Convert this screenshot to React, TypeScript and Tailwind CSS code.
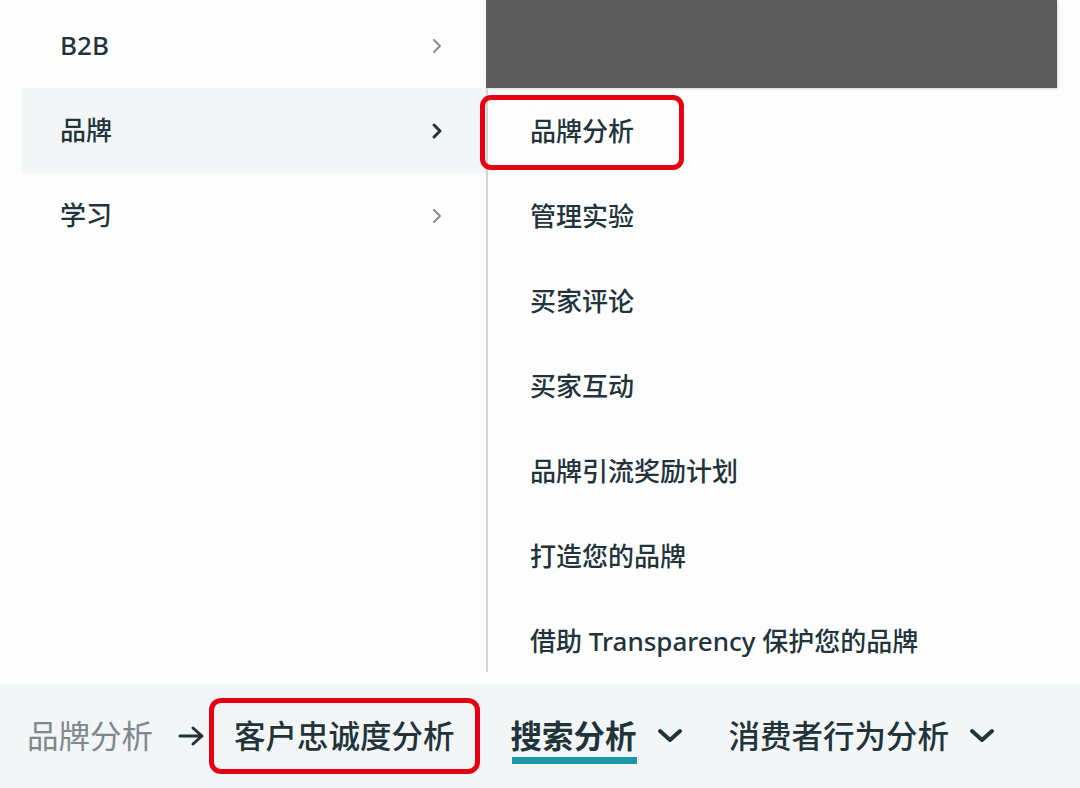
import React from "react";

const font = { fontFamily: '"Noto Sans", "Noto Sans CJK SC", sans-serif' };

function ChevronRight({ active }: { active?: boolean }) {
  return (
    <svg width="14" height="18" viewBox="0 0 14 18" fill="none">
      <path
        d="M4 3 L10 9 L4 15"
        stroke={active ? "#22343a" : "#8b9398"}
        strokeWidth={active ? 3 : 2.2}
        strokeLinecap="round"
        strokeLinejoin="round"
      />
    </svg>
  );
}

function ChevronDown() {
  return (
    <svg width="26" height="16" viewBox="0 0 26 16" fill="none">
      <path d="M3 3 L13 12 L23 3" stroke="#22343a" strokeWidth="4" strokeLinecap="round" strokeLinejoin="round" />
    </svg>
  );
}

function ArrowRight() {
  return (
    <svg width="28" height="22" viewBox="0 0 28 22" fill="none">
      <path d="M2 11 H24 M15 3 L24 11 L15 19" stroke="#22343a" strokeWidth="3" strokeLinecap="round" strokeLinejoin="round" />
    </svg>
  );
}

const leftItems = [
  { label: "B2B", active: false },
  { label: "品牌", active: true },
  { label: "学习", active: false },
];

const rightItems = [
  "品牌分析",
  "管理实验",
  "买家评论",
  "买家互动",
  "品牌引流奖励计划",
  "打造您的品牌",
  "借助 Transparency 保护您的品牌",
];

export default function App() {
  return (
    <div className="w-[1080px] h-[788px] bg-[#fdfdfd] flex flex-col overflow-hidden" style={font}>
      <div className="h-[684px] flex">
        {/* Left menu */}
        <div className="w-[486px] shrink-0 pl-[22px] pt-[3px]">
          {leftItems.map((it) => (
            <div
              key={it.label}
              className={`h-[85px] flex items-center justify-between pl-[38px] pr-[42px] ${it.active ? "bg-[#f3f6f7]" : ""}`}
            >
              <span className="text-[26px] font-medium text-[#22343a]">{it.label}</span>
              <ChevronRight active={it.active} />
            </div>
          ))}
        </div>
        {/* Right column */}
        <div className="flex-1 flex flex-col">
          <div className="h-[88px] w-[571px] bg-[#5d5d5d] shadow-[1px_1px_2px_rgba(0,0,0,0.15)]" />
          <div className="flex">
            <div className="w-[2px] h-[584px] bg-[#d4d6d7] shrink-0" />
            <div className="flex flex-col pt-[1px]">
              {rightItems.map((t, i) => (
                <div key={t} className="relative h-[85px] flex items-center pl-[42px]">
                  {i === 0 && (
                    <div className="absolute left-[-8px] top-[6px] w-[204px] h-[75px] border-[5px] border-[#e60012] rounded-[11px]" />
                  )}
                  <span className="relative text-[26px] font-medium text-[#22343a] whitespace-nowrap">{t}</span>
                </div>
              ))}
            </div>
          </div>
        </div>
      </div>
      {/* Bottom bar */}
      <div className="h-[104px] bg-[#f2f6f7] flex items-center pl-[27px]">
        <span className="text-[31.5px] text-[#7f888c]">品牌分析</span>
        <div className="ml-[25px] mr-[3px] flex items-center">
          <ArrowRight />
        </div>
        <div className="h-[76px] pl-[20px] pr-[20px] flex items-center border-[5px] border-[#e60012] rounded-[12px]">
          <span className="text-[31.5px] font-medium text-[#22343a]">客户忠诚度分析</span>
        </div>
        <div className="ml-[31px] relative flex items-center">
          <span className="text-[31.5px] font-bold text-[#22343a]">搜索分析</span>
          <div className="absolute left-[1px] w-[125px] top-[45px] h-[7px] bg-[#1d97a5]" />
        </div>
        <div className="ml-[20px] flex items-center">
          <ChevronDown />
        </div>
        <span className="ml-[46px] text-[31.5px] font-medium text-[#22343a]">消费者行为分析</span>
        <div className="ml-[20px] flex items-center">
          <ChevronDown />
        </div>
      </div>
    </div>
  );
}
